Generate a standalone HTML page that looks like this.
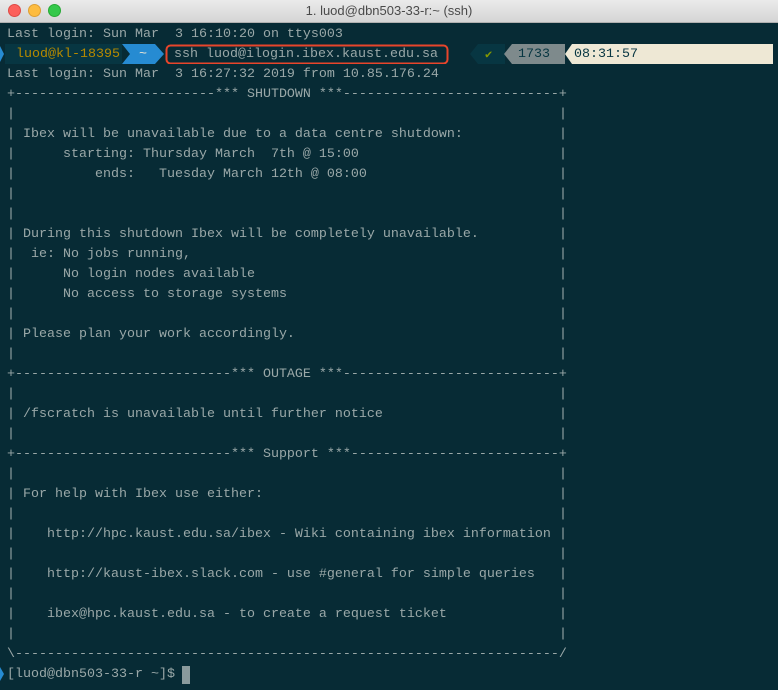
<!DOCTYPE html>
<html><head><meta charset="utf-8"><style>
html,body{margin:0;padding:0;}
body{width:778px;height:690px;overflow:hidden;background:#072b35;position:relative;font-family:"Liberation Mono",monospace;}
.tb{position:absolute;left:0;top:0;width:778px;height:22px;background:linear-gradient(#ebebeb,#d5d5d5);border-bottom:1px solid #b0b0b0;}
.tb .t{position:absolute;left:0;right:0;top:3px;text-align:center;font:13px "Liberation Sans",sans-serif;color:#4a4a4a;}
.dot{position:absolute;top:4px;width:12px;height:12px;border-radius:50%;}
.term{position:absolute;left:7px;top:25px;font-size:13.33px;line-height:20px;color:#9aa8a8;white-space:normal;}
.l{height:20px;position:relative;white-space:pre;}
.b::after{content:"|";position:absolute;left:552px;top:0;}
.seg{position:absolute;height:20px;white-space:pre;}
</style></head><body>
<div class="tb">
<div class="dot" style="left:8px;background:#fc605b;border:1px solid #de4a45;width:11px;height:11px"></div>
<div class="dot" style="left:28px;background:#fdbc40;border:1px solid #de9f34;width:11px;height:11px"></div>
<div class="dot" style="left:48px;background:#34c84a;border:1px solid #27aa35;width:11px;height:11px"></div>
<div class="t">1. luod@dbn503-33-r:~ (ssh)</div>
</div>
<svg style="position:absolute;left:0;top:44px" width="778" height="20">
<polygon points="0,2 4,10 0,18" fill="#268bd2"/>
<rect x="5" y="0" width="117" height="20" fill="#073642"/>
<polygon points="122,0 155,0 164,10 155,20 122,20 130,10" fill="#268bd2"/>
<polygon points="478,0 505,0 505,20 478,20 470,10" fill="#073642"/>
<polygon points="512,0 565,0 565,20 512,20 504,10" fill="#7e8a8c"/>
<polygon points="572,0 773,0 773,20 572,20 565,10" fill="#eee8d5"/>
<rect x="166.5" y="1.5" width="281" height="18" rx="4" fill="none" stroke="#e8452b" stroke-width="2"/>
</svg>
<div class="seg" style="left:16px;top:45px;line-height:20px;font-size:13.33px;color:#b58900;">luod@kl-18395</div>
<div class="seg" style="left:139px;top:45px;line-height:20px;font-size:13.33px;color:#eee8d5;">~</div>
<div class="seg" style="left:174px;top:45px;line-height:20px;font-size:13.33px;color:#9aa8a8;">ssh luod@ilogin.ibex.kaust.edu.sa</div>
<div class="seg" style="left:485px;top:45px;line-height:20px;font-size:12px;color:#859900;">✔</div>
<div class="seg" style="left:518px;top:45px;line-height:20px;font-size:13.33px;color:#073642;">1733</div>
<div class="seg" style="left:574px;top:45px;line-height:20px;font-size:13.33px;color:#073642;">08:31:57</div>
<div class="term"><div class="l">Last login: Sun Mar  3 16:10:20 on ttys003</div><div class="l"> </div><div class="l">Last login: Sun Mar  3 16:27:32 2019 from 10.85.176.24</div><div class="l">+-------------------------*** SHUTDOWN ***---------------------------+</div><div class="l b">|</div><div class="l b">| Ibex will be unavailable due to a data centre shutdown:</div><div class="l b">|      starting: Thursday March  7th @ 15:00</div><div class="l b">|          ends:   Tuesday March 12th @ 08:00</div><div class="l b">|</div><div class="l b">|</div><div class="l b">| During this shutdown Ibex will be completely unavailable.</div><div class="l b">|  ie: No jobs running,</div><div class="l b">|      No login nodes available</div><div class="l b">|      No access to storage systems</div><div class="l b">|</div><div class="l b">| Please plan your work accordingly.</div><div class="l b">|</div><div class="l">+---------------------------*** OUTAGE ***---------------------------+</div><div class="l b">|</div><div class="l b">| /fscratch is unavailable until further notice</div><div class="l b">|</div><div class="l">+---------------------------*** Support ***--------------------------+</div><div class="l b">|</div><div class="l b">| For help with Ibex use either:</div><div class="l b">|</div><div class="l b">|    http://hpc.kaust.edu.sa/ibex - Wiki containing ibex information</div><div class="l b">|</div><div class="l b">|    http://kaust-ibex.slack.com - use #general for simple queries</div><div class="l b">|</div><div class="l b">|    ibex@hpc.kaust.edu.sa - to create a request ticket</div><div class="l b">|</div><div class="l">\--------------------------------------------------------------------/</div><div class="l">[luod@dbn503-33-r ~]$ </div></div>
<svg style="position:absolute;left:0;top:664px" width="10" height="20"><polygon points="0,3 4,10 0,17" fill="#268bd2"/></svg>
<div style="position:absolute;left:182px;top:666px;width:8px;height:18px;background:#8a9a9c"></div>
</body></html>
